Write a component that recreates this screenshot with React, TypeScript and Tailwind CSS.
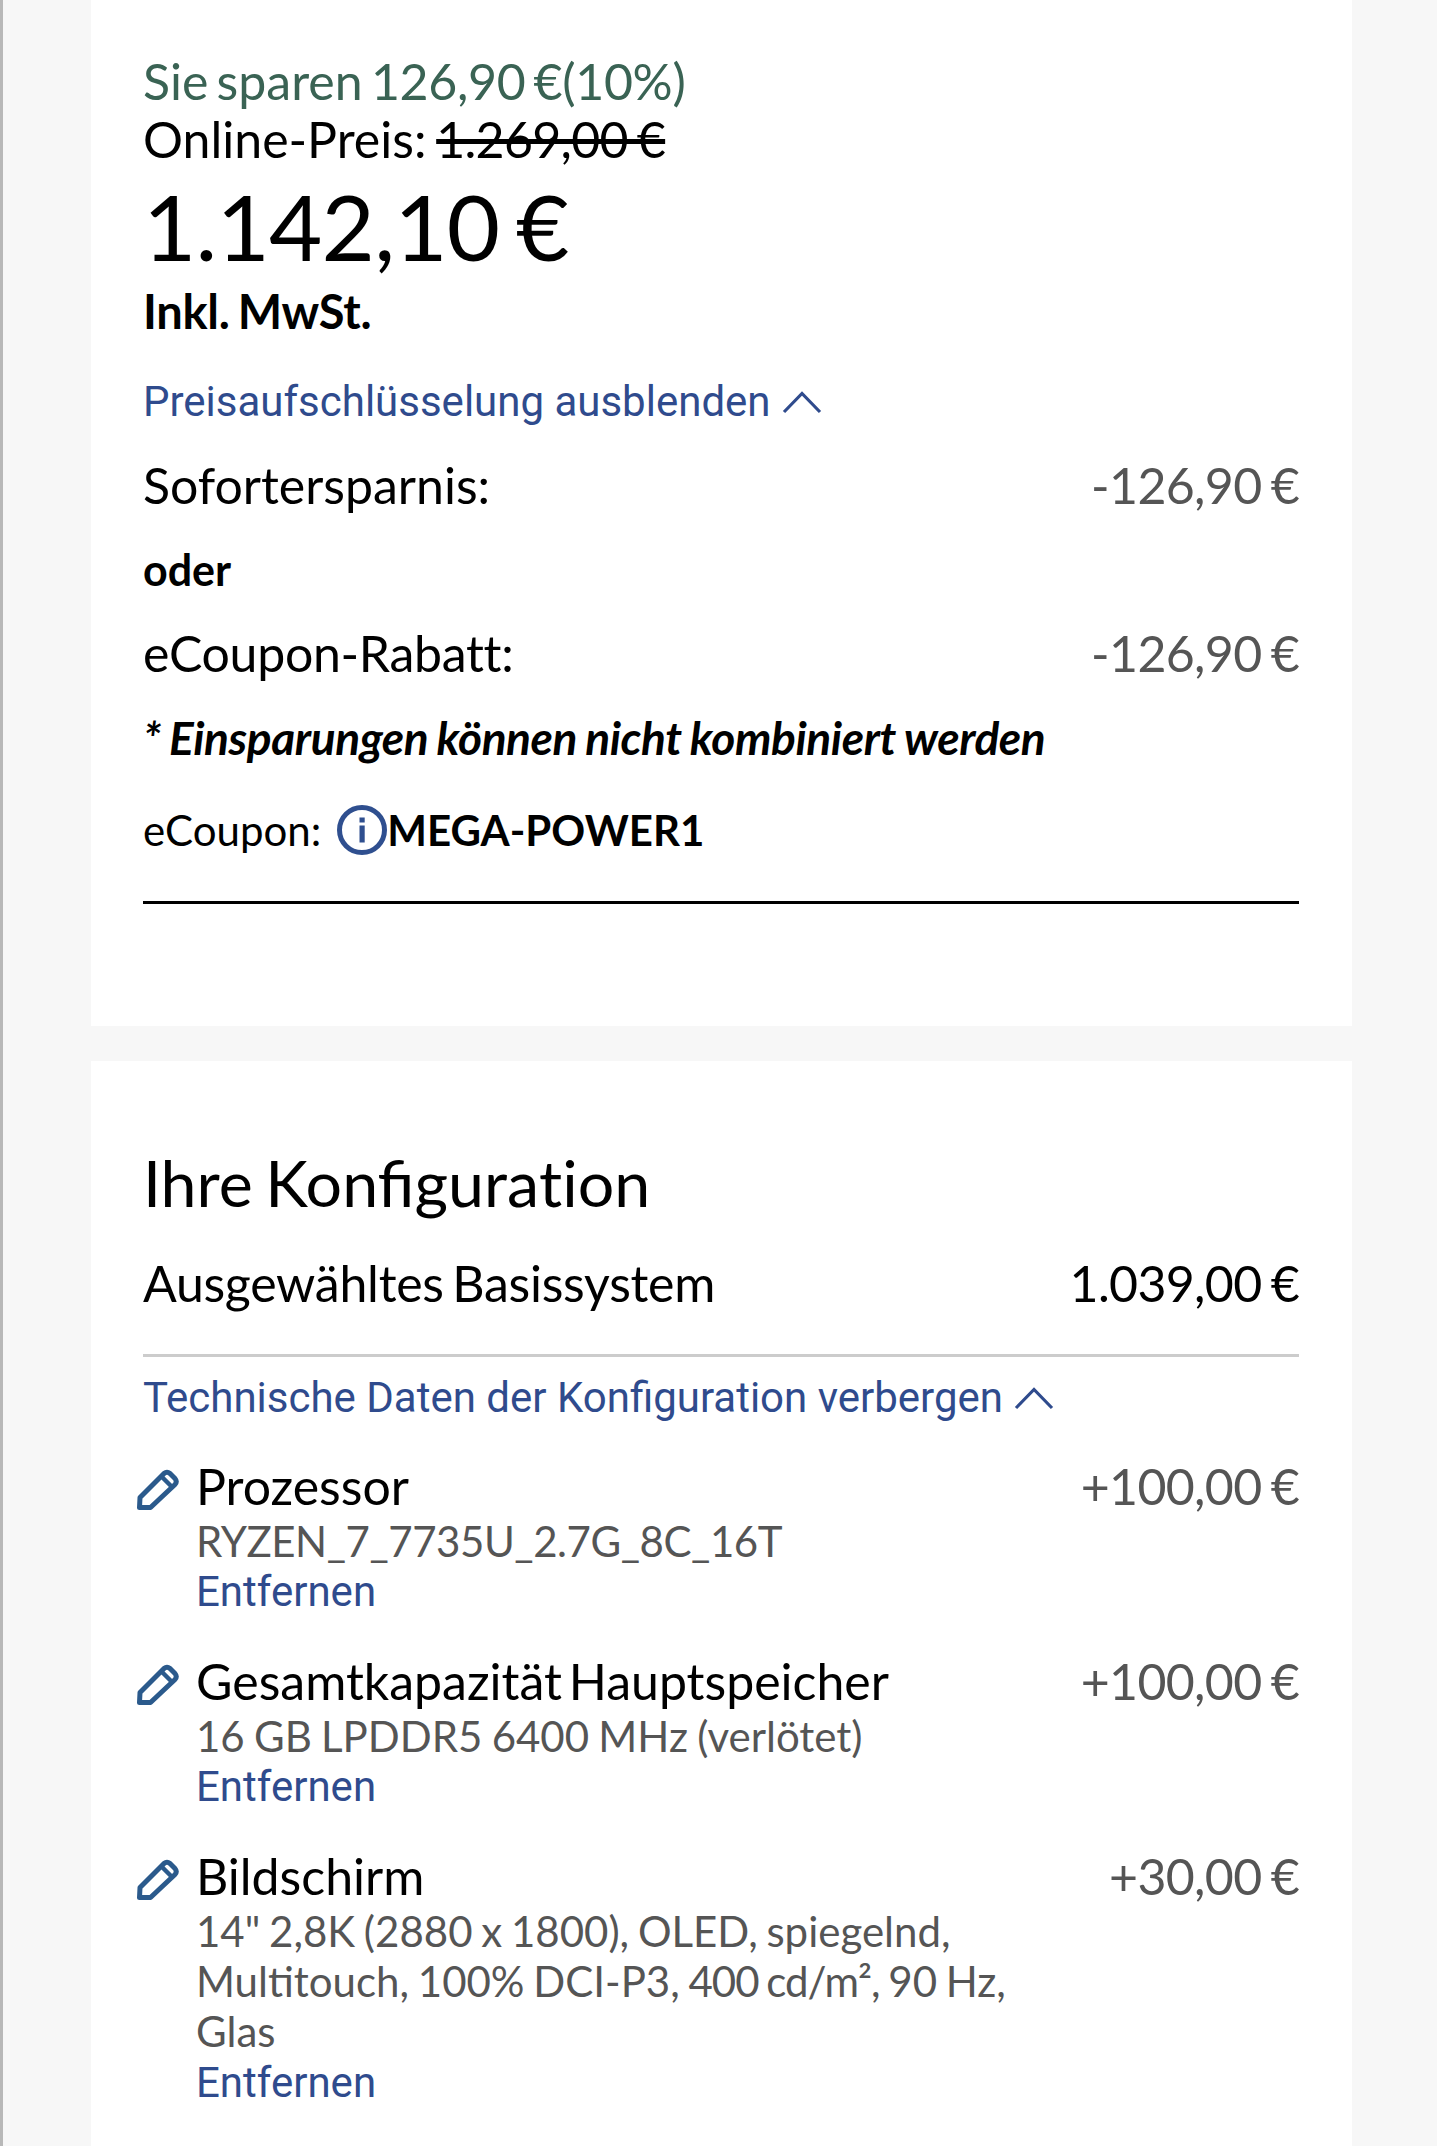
import React from "react";

const lato = "font-['Lato',sans-serif]";
const roboto = "font-['Roboto',sans-serif]";

function Chevron() {
  return (
    <svg width="40" height="24" viewBox="0 0 40 24" fill="none" className="ml-[11px] shrink-0">
      <path d="M2 22 L20 3.5 L38 22" stroke="#2f4b8d" strokeWidth="3.2" />
    </svg>
  );
}

function Pencil() {
  return (
    <svg width="42" height="42" viewBox="0 0 42 42" fill="none" className="shrink-0">
      <path
        d="M2.5 39.5 L3 29.5 L27 5.5 Q30 3 33 5.5 L38 10.5 Q40.5 13.5 38 16.5 L13.5 39.5 Z"
        stroke="#2b5a8c"
        strokeWidth="5"
        strokeLinejoin="round"
      />
      <path d="M24.5 8.5 L35 19" stroke="#2b5a8c" strokeWidth="4.4" />
    </svg>
  );
}

function Info() {
  return (
    <svg width="50" height="50" viewBox="0 0 50 50" fill="none" className="shrink-0">
      <circle cx="25" cy="25" r="22.5" stroke="#2f4f8f" strokeWidth="5" />
      <rect x="22.5" y="12.5" width="5.2" height="5" fill="#2f4f8f" />
      <rect x="22.5" y="20.5" width="5.2" height="17" fill="#2f4f8f" />
    </svg>
  );
}

function ConfigRow({
  title,
  price,
  children,
}: {
  title: string;
  price: string;
  children: React.ReactNode;
}) {
  return (
    <div className="flex mb-[33.8px]">
      <div className="w-[59px] shrink-0 -ml-[6px] pt-[12px]">
        <Pencil />
      </div>
      <div className="flex-1">
        <div className="text-[50px] leading-[60px] text-black [word-spacing:-6px]">{title}</div>
        <div className="text-[42px] leading-[50.2px] text-[#555555] whitespace-nowrap">{children}</div>
        <div className={`${roboto} text-[42px] leading-[50px] mt-[1px] text-[#2f4b8d]`}>Entfernen</div>
      </div>
      <div className="text-[50px] leading-[60px] text-[#555555] shrink-0 [word-spacing:-3px] tracking-[-0.65px]">
        {price}
      </div>
    </div>
  );
}

export default function App() {
  return (
    <div className={`${lato} flex flex-col h-[2146px] overflow-hidden bg-[#f7f7f7] border-l-[3px] border-[#b8b8b8]`}>
      <div className="ml-[88px] w-[1261px] flex flex-col flex-1">
        <section className="bg-white h-[1026px] shrink-0 pl-[52px] pr-[53px] pt-[53px]">
          <div className="text-[50px] leading-[56px] text-[#3a6354] [word-spacing:-4.5px]">
            Sie sparen <span className="tracking-[-0.3px]">126,90 €(10%)</span>
          </div>
          <div className="text-[50px] leading-[58px] text-black mt-[1px] [word-spacing:-3px]">
            Online-Preis: <span className="line-through tracking-[-0.7px]">1.269,00 €</span>
          </div>
          <div className="text-[92px] leading-[100px] text-black mt-[8px] tracking-[-0.8px] [word-spacing:-6px]">
            1.142,10 €
          </div>
          <div className="text-[47px] leading-[56px] font-bold text-black mt-[7px] [word-spacing:-3px] tracking-[-0.3px]">
            Inkl. MwSt.
          </div>
          <div className={`${roboto} flex items-center text-[42px] leading-[50px] text-[#2f4b8d] mt-[38px]`}>
            Preisaufschlüsselung ausblenden
            <Chevron />
          </div>
          <div className="flex justify-between text-[50px] leading-[60px] mt-[28px]">
            <span className="text-black">Sofortersparnis:</span>
            <span className="text-[#555555] [word-spacing:-3px] tracking-[-0.65px]">-126,90 €</span>
          </div>
          <div className="text-[43px] leading-[50px] font-bold text-black mt-[30px]">oder</div>
          <div className="flex justify-between text-[50px] leading-[60px] mt-[28px]">
            <span className="text-black tracking-[-0.3px]">eCoupon-Rabatt:</span>
            <span className="text-[#555555] [word-spacing:-3px] tracking-[-0.65px]">-126,90 €</span>
          </div>
          <div className="text-[46px] leading-[50px] font-bold italic text-black mt-[30px] [word-spacing:-1.5px] tracking-[-0.4px]">
            * Einsparungen können nicht kombiniert werden
          </div>
          <div className="flex items-center h-[50px] mt-[42px] text-[42px] text-black">
            <span>eCoupon:</span>
            <span className="ml-[16px]">
              <Info />
            </span>
            <span className="font-bold">MEGA-POWER1</span>
          </div>
          <div className="h-[3px] bg-black mt-[46px]" />
        </section>

        <section className="bg-white flex-1 mt-[35px] pl-[52px] pr-[53px] pt-[85px]">
          <h2 className="text-[64.5px] leading-[72px] text-black [word-spacing:-4px]">
            Ihre Konfigura<span className="[font-variant-ligatures:none]">tion</span>
          </h2>
          <div className="flex justify-between text-[50px] leading-[60px] text-black mt-[35px]">
            <span className="[word-spacing:-4px] tracking-[-0.25px]">Ausgewähltes Basissystem</span>
            <span className="[word-spacing:-3px] tracking-[-0.65px]">1.039,00 €</span>
          </div>
          <div className="h-[3px] bg-[#cccccc] mt-[41px]" />
          <div className={`${roboto} flex items-center text-[42px] leading-[50px] text-[#2f4b8d] mt-[16px] mb-[33px]`}>
            Technische Daten der Konfiguration verbergen
            <Chevron />
          </div>
          <ConfigRow title="Prozessor" price="+100,00 €">
            <div className="tracking-[-0.45px]">RYZEN_7_7735U_2.7G_8C_16T</div>
          </ConfigRow>
          <ConfigRow title="Gesamtkapazität Hauptspeicher" price="+100,00 €">
            <div className="[word-spacing:-1.5px]">16 GB LPDDR5 6400 MHz (verlötet)</div>
          </ConfigRow>
          <ConfigRow title="Bildschirm" price="+30,00 €">
            <div className="[word-spacing:-2px]">14" 2,8K (2880 x 1800), OLED, spiegelnd,</div>
            <div className="[word-spacing:-2px]">
              Multitouch, 100% DCI-P3, <span className="tracking-[-1px]">400 cd/m²,</span> 90 Hz,
            </div>
            <div>Glas</div>
          </ConfigRow>
        </section>
      </div>
    </div>
  );
}
